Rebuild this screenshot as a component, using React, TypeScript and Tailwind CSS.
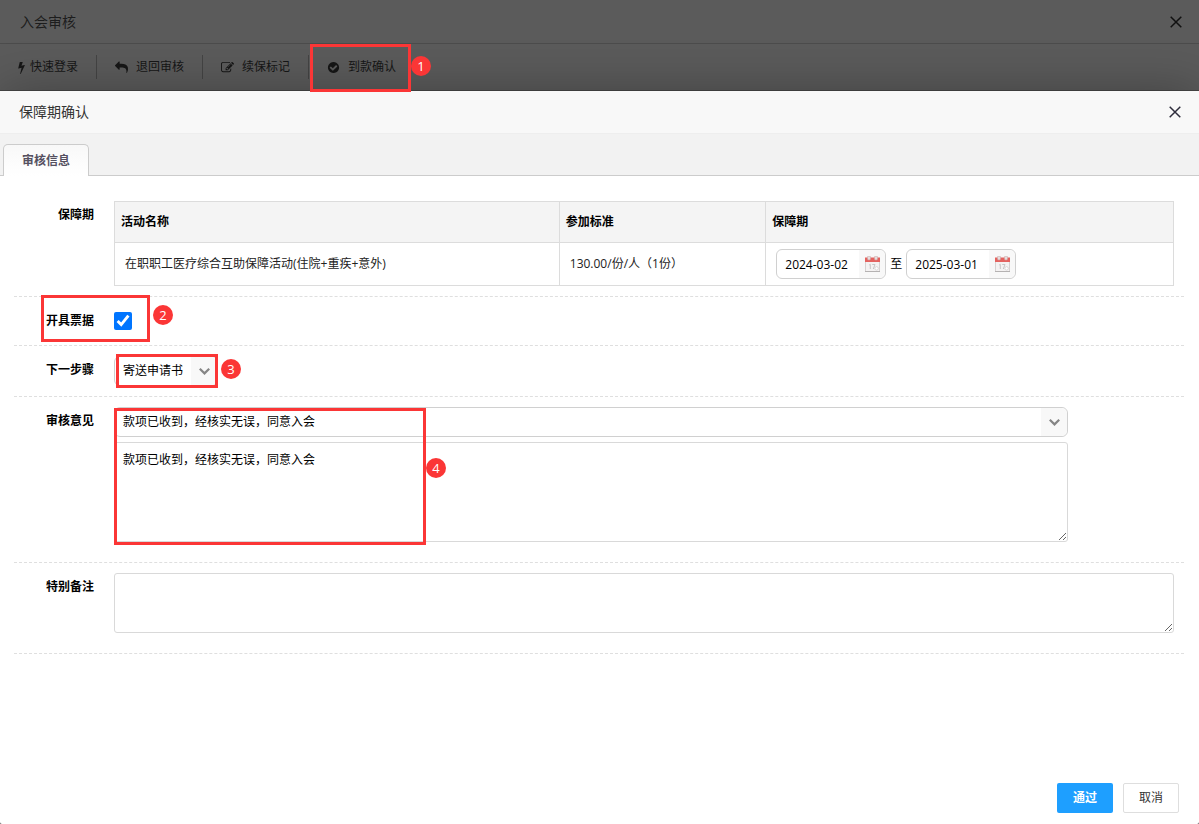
import React, { ReactNode, useState } from "react";

interface ToolItem {
  id: number;
  texto: string;
  icon: ReactNode;
}

const ICON_BOLT = "M1333 566q18 20 7 44l-540 1157q-13 25-42 25-4 0-14-2-17-5-25.5-19t-4.5-30l197-808-406 101q-4 1-12 1-18 0-31-11-18-15-13-39l201-825q4-14 16-23t28-9h328q19 0 32 12.5t13 29.5q0 8-5 18l-171 463 396-98q8-2 12-2 19 0 34 15z"
const ICON_REPLY = "M1792 640q0 26-19 45l-512 512q-19 19-45 19t-45-19-19-45v-256h-224q-98 0-175.5 6t-154 21.5-133 42.5-105.5 69.5-80 101-48.5 138.5-17.5 181q0 55 5 123 0 6 2.5 23.5t2.5 26.5q0 15-8.5 25t-23.5 10q-16 0-28-17-7-9-13-22t-13.5-30-10.5-24q-127-285-127-451 0-199 53-333 162-403 875-403h224v-256q0-26 19-45t45-19 45 19l512 512q19 19 19 45z"
const ICON_EDIT = "M888 1184l116-116-152-152-116 116v56h96v96h56zm440-720q-16-16-33 1l-350 350q-17 17-1 33t33-1l350-350q17-17 1-33zm80 594v190q0 119-84.5 203.5t-203.5 84.5h-832q-119 0-203.5-84.5t-84.5-203.5v-832q0-119 84.5-203.5t203.5-84.5h832q63 0 117 25 15 7 18 23 3 17-9 29l-49 49q-14 14-32 8-23-6-45-6h-832q-66 0-113 47t-47 113v832q0 66 47 113t113 47h832q66 0 113-47t47-113v-126q0-13 9-22l64-64q15-15 35-7t20 29zm-96-738l288 288-672 672h-288v-288zm444 132l-92 92-288-288 92-92q28-28 68-28t68 28l152 152q28 28 28 68t-28 68z"
const ICON_CHECK = "M1412 734q0-28-18-46l-91-90q-19-19-45-19t-45 19l-408 407-226-226q-19-19-45-19t-45 19l-91 90q-18 18-18 46 0 27 18 45l362 362q19 19 45 19 27 0 46-19l543-543q18-18 18-45zm252 162q0 209-103 385.5t-279.5 279.5-385.5 103-385.5-103-279.5-279.5-103-385.5 103-385.5 279.5-279.5 385.5-103 385.5 103 279.5 279.5 103 385.5z"

const tools: ToolItem[] = [
  {
    id: 1,
    texto: "快速登录",
    icon: <svg className="mr-[5px] h-[13px] w-[7px]" viewBox="448 0 896 1792" fill="currentColor"><path d={ICON_BOLT} /></svg>
  },
  {
    id: 2,
    texto: "退回审核",
    icon: <svg className="mr-2 size-[13px]" viewBox="0 0 1792 1792" fill="currentColor"><path transform="translate(1792 0) scale(-1 1)" d={ICON_REPLY} /></svg>
  },
  {
    id: 3,
    texto: "续保标记",
    icon: <svg className="mr-2 size-[13px]" viewBox="0 0 1792 1792" fill="currentColor"><path d={ICON_EDIT} /></svg>
  },
  {
    id: 4,
    texto: "到款确认",
    icon: <svg className="mr-2 size-[13px]" viewBox="0 0 1792 1792" fill="currentColor"><path d={ICON_CHECK} /></svg>
  }
]

const OPINION = "款项已收到，经核实无误，同意入会"

function CloseIcon() {
  return (
    <svg className="size-3" viewBox="0 0 12 12" fill="none" stroke="currentColor" strokeWidth="1.5">
      <path d="M0.7 0.7 L11.3 11.3 M11.3 0.7 L0.7 11.3" />
    </svg>
  )
}

function CalendarIcon() {
  return (
    <svg className="h-4 w-[15px]" viewBox="0 0 15 16">
      <rect x="0.5" y="5.5" width="14" height="10" fill="#f4f2f2" stroke="#d6d2d2" />
      <rect x="0" y="1.5" width="15" height="4.5" fill="#e4625f" />
      <rect x="0" y="15" width="15" height="1" fill="#b5b2b2" />
      <rect x="2.5" y="0" width="3" height="4" rx="1.2" fill="#e6dede" stroke="#c9a5a4" strokeWidth="0.6" />
      <rect x="9.5" y="0" width="3" height="4" rx="1.2" fill="#e6dede" stroke="#c9a5a4" strokeWidth="0.6" />
      <path d="M4.2 9 L5.3 8.3 V13 M7.3 8.5 H10 L8.3 13" fill="none" stroke="#c2c0c0" strokeWidth="0.9" />
      <circle cx="11.6" cy="12.4" r="1.7" fill="#fff" stroke="#cfcccc" strokeWidth="0.7" />
    </svg>
  )
}

// red frame drawn over a part of the form, the number sits beside it
function Mark({ box, dot, n }: { box: string; dot: string; n: number }) {
  return (
    <>
      <span className={`pointer-events-none absolute z-20 border-3 border-[#fb3636] ${box}`} />
      <span className={`pointer-events-none absolute z-20 flex size-5 items-center justify-center rounded-full bg-[#fb3636] text-[13px] leading-5 text-white ${dot}`}>{n}</span>
    </>
  )
}

function Row({ label, htmlFor, className = "pb-2.5", children }: { label: string; htmlFor?: string; className?: string; children: ReactNode }) {
  return (
    <div className={`relative flex gap-5 border-b border-dashed border-[#dfdfdf] pt-2.5 pr-2.5 ${className}`}>
      <label htmlFor={htmlFor} className="w-20 shrink-0 text-right leading-7 font-bold">{label}</label>
      <div className="min-w-0 flex-1">{children}</div>
    </div>
  )
}

function Select({ id, options, className }: { id: string; options: string[]; className: string }) {
  return (
    <div className={`relative h-[30px] ${className}`}>
      <select id={id} className="h-full w-full appearance-none rounded-md border border-[#d0d0d0] bg-white pr-7 pl-2 outline-none">
        {options.map((op) => <option key={op}>{op}</option>)}
      </select>
      <span className="pointer-events-none absolute inset-y-px right-px flex w-[26px] items-center justify-center rounded-r-md bg-[#f8f8f8] text-[#858585]">
        <svg className="h-[7px] w-[11px]" viewBox="0 0 11 7" fill="none" stroke="currentColor" strokeWidth="2.2">
          <path d="M0.8 0.8 L5.5 5.4 L10.2 0.8" />
        </svg>
      </span>
    </div>
  )
}

function DateInput({ label, value }: { label: string; value: string }) {
  return (
    <div className="relative h-[30px] w-[110px]">
      <input aria-label={label} defaultValue={value} className="h-full w-full rounded-md border border-[#d0d0d0] bg-white pr-7 pl-2 outline-none" />
      <button type="button" aria-label={label} className="absolute inset-y-px right-px flex w-[26px] items-center justify-center rounded-r-md bg-[#f8f8f8]">
        <CalendarIcon />
      </button>
    </div>
  )
}

export default function App() {
  const [invoice, setInvoice] = useState(true)
  const [opinion, setOpinion] = useState(OPINION)
  const [remark, setRemark] = useState("")

  return (
    <div className="flex min-h-screen flex-col bg-[#5b5b5b] font-['Open_Sans','Noto_Sans_CJK_SC',sans-serif] text-xs text-black">
      <header className="flex h-11 items-center justify-between border-b border-[#4c4c4c] pr-[17px] pl-5 text-[#1d1d1d]">
        <h1 className="text-sm">入会审核</h1>
        <button type="button" aria-label="关闭" className="text-[#111]"><CloseIcon /></button>
      </header>
      <nav className="flex h-[47px] items-center border-b border-[#484848] text-[#161616]">
        {tools.map((tool) => (
          <div key={tool.id} className="relative flex h-6 items-center border-r border-[#444] last:border-r-0">
            <button type="button" className="flex items-center px-[18px]">
              {tool.icon}
              {tool.texto}
            </button>
            {tool.id === 4 && <Mark n={1} box="-top-[11px] left-px h-12 w-[101px]" dot="top-px left-[102px]" />}
          </div>
        ))}
      </nav>

      <section className="relative flex flex-1 flex-col rounded-xs bg-white shadow-[1px_1px_50px_rgba(0,0,0,0.3)]">
        <div className="flex h-[43px] items-center justify-between border-b border-[#eee] bg-[#f8f8f8] pr-[18px] pl-[19px] text-[#333]">
          <h2 className="text-sm">保障期确认</h2>
          <button type="button" aria-label="关闭" className="text-[#2e2d3c]"><CloseIcon /></button>
        </div>
        <div className="flex h-[42px] items-end border-b border-[#ccc] bg-[#f2f2f2] px-[3px]">
          <button type="button" className="-mb-px h-8 rounded-t-[5px] border border-b-0 border-[#ccc] bg-linear-to-b from-[#f8f8f8] to-white px-[18px] font-bold text-[#555060]">审核信息</button>
        </div>

        <form className="flex flex-1 flex-col" onSubmit={(e) => e.preventDefault()}>
          <div className="pt-[15px] pr-[15px] pl-3.5">
            <Row label="保障期">
              <table className="w-full table-fixed border-collapse border border-[#dcdcdc] text-left">
                <thead>
                  <tr className="h-[41px] bg-[#f4f4f4]">
                    <th className="w-[42%] border border-[#dcdcdc] px-1.5">活动名称</th>
                    <th className="w-[19.5%] border border-[#dcdcdc] px-1.5">参加标准</th>
                    <th className="border border-[#dcdcdc] px-1.5">保障期</th>
                  </tr>
                </thead>
                <tbody>
                  <tr className="h-[43px] text-[#222]">
                    <td className="border border-[#dcdcdc] px-2.5">在职职工医疗综合互助保障活动(住院+重疾+意外)</td>
                    <td className="border border-[#dcdcdc] px-2.5">130.00/份/人（1份）</td>
                    <td className="border border-[#dcdcdc] px-2.5">
                      <div className="flex items-center gap-1 text-black">
                        <DateInput label="开始日期" value="2024-03-02" />
                        至
                        <DateInput label="结束日期" value="2025-03-01" />
                      </div>
                    </td>
                  </tr>
                </tbody>
              </table>
            </Row>

            <Row label="开具票据" htmlFor="invoice">
              <div className="flex h-7 items-center">
                <input id="invoice" type="checkbox" className="size-[18px]" checked={invoice} onChange={(e) => setInvoice(e.target.checked)} />
              </div>
              <Mark n={2} box="-top-0.5 left-[27px] h-[47px] w-[109px]" dot="top-2 left-[139px]" />
            </Row>

            <Row label="下一步骤" htmlFor="step">
              <Select id="step" className="w-[104px]" options={["寄送申请书"]} />
              <Mark n={3} box="top-2 left-[102px] h-[34px] w-[102px]" dot="top-[13px] left-[207px]" />
            </Row>

            <Row label="审核意见" htmlFor="opinion" className="pb-5">
              <div className="flex w-9/10 flex-col gap-[5px]">
                <Select id="opinion" className="w-full" options={[OPINION]} />
                <textarea aria-label="审核意见" className="block h-[100px] w-full rounded-[3px] border border-[#d9d9d9] px-2 py-[7px] leading-5 outline-none" value={opinion} onChange={(e) => setOpinion(e.target.value)} />
              </div>
              <Mark n={4} box="top-[11px] left-[100px] h-[137px] w-[312px]" dot="top-[61px] left-[412px]" />
            </Row>

            <Row label="特别备注" htmlFor="remark" className="pb-5">
              <textarea id="remark" className="block h-[60px] w-full rounded-[3px] border border-[#d9d9d9] px-2 py-[7px] leading-5 outline-none" value={remark} onChange={(e) => setRemark(e.target.value)} />
            </Row>
          </div>

          <div className="mt-auto flex justify-end gap-2.5 pt-5 pr-5 pb-[11px]">
            <button type="submit" className="h-[30px] w-14 rounded-xs bg-[#1e9fff] font-bold text-white">通过</button>
            <button type="button" className="h-[30px] w-14 rounded-xs border border-[#dedede] bg-white text-[#333]">取消</button>
          </div>
        </form>
      </section>
    </div>
  )
}
